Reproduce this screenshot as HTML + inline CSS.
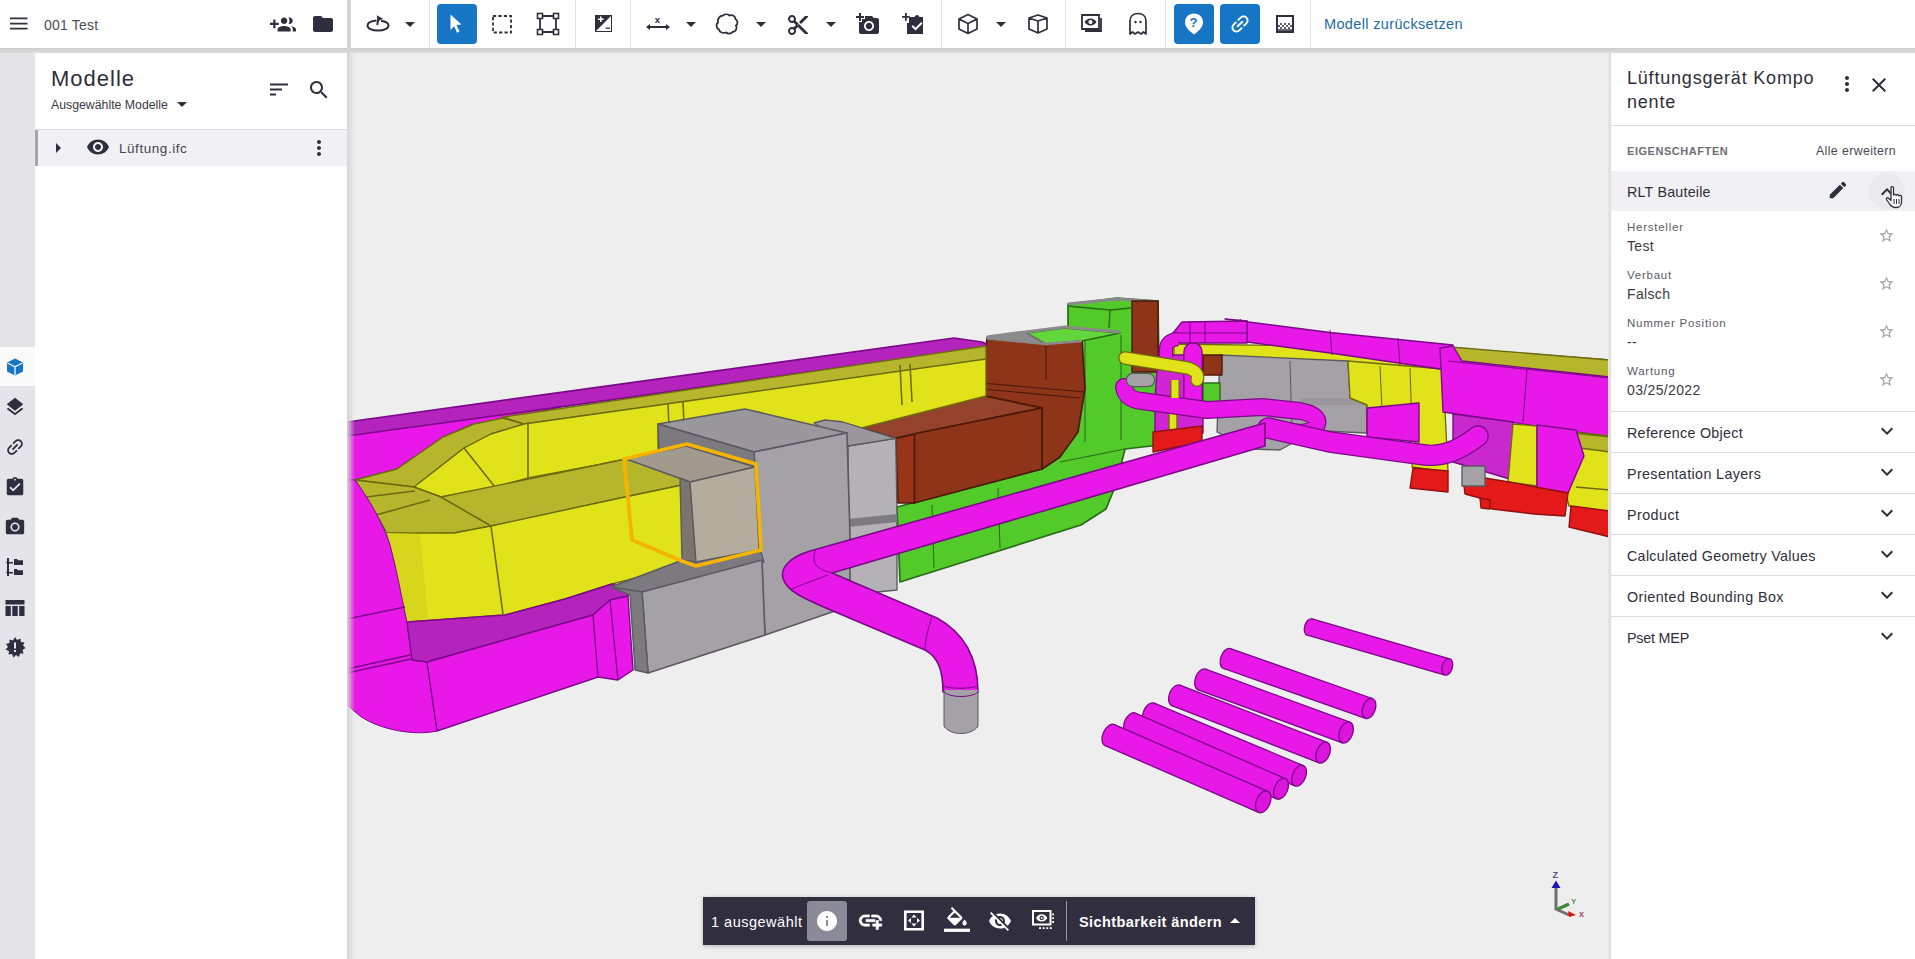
<!DOCTYPE html>
<html><head><meta charset="utf-8">
<style>
*{margin:0;padding:0;box-sizing:border-box}
html,body{width:1915px;height:959px;overflow:hidden;background:#ececec;font-family:"Liberation Sans",sans-serif;color:#2f2e3a}
.a{position:absolute}
.t{position:absolute;white-space:nowrap;line-height:1}
svg.i{position:absolute;fill:#2f2e3d}
#scene{position:absolute;left:347px;top:48px;width:1264px;height:911px}
</style></head><body>
<!-- 3D scene -->
<svg id="scene" viewBox="347 48 1264 911" width="1264" height="911">
<rect x="347" y="48" width="1264" height="911" fill="#eeeeee"/>
<polygon points="1174,344 1453,348 1610,360 1610,378 1448,372 1174,358" fill="#e0e21a" stroke="#6e6a10" stroke-width="1.36" stroke-linejoin="round"/>
<polygon points="1220,355 1348,361 1350,398 1367,405 1367,433 1300,430 1296,441 1280,450 1252,449 1217,432" fill="#a4a2a6" stroke="#5a5a60" stroke-width="1.36" stroke-linejoin="round"/>
<polyline points="1290,361 1292,430" fill="none" stroke="#5a5a60" stroke-width="1.04" stroke-linejoin="round"/>
<polygon points="1300,398 1350,398 1367,405 1300,405" fill="#9a989c"/>
<polygon points="1348,361 1443,369 1448,472 1412,467 1417,430 1367,433 1367,405 1350,398" fill="#e0e21a" stroke="#6e6a10" stroke-width="1.36" stroke-linejoin="round"/>
<polyline points="1380,366 1383,432" fill="none" stroke="#6e6a10" stroke-width="1.04" stroke-linejoin="round"/>
<polyline points="1410,368 1412,430" fill="none" stroke="#6e6a10" stroke-width="1.04" stroke-linejoin="round"/>
<polygon points="1367,408 1419,403 1419,442 1367,437" fill="#e818e8" stroke="#7a0a88" stroke-width="1.36" stroke-linejoin="round"/>
<polygon points="1225,319 1330,332.5 1453,345 1448,361 1440,369 1330,353 1247,342 1247,321" fill="#e818e8" stroke="#7a0a88" stroke-width="1.36" stroke-linejoin="round"/>
<polyline points="1240,319 1248,343" fill="none" stroke="#7a0a88" stroke-width="1.04" stroke-linejoin="round"/>
<polyline points="1330,330 1332,355" fill="none" stroke="#7a0a88" stroke-width="1.04" stroke-linejoin="round"/>
<polyline points="1398,338 1400,365" fill="none" stroke="#7a0a88" stroke-width="1.04" stroke-linejoin="round"/>
<polygon points="1450,347 1610,360 1610,378 1448,362" fill="#b6b62c" stroke="#6e6a10" stroke-width="1.36" stroke-linejoin="round"/>
<polygon points="1440,348 1453,346 1462,361 1610,377 1610,437 1443,412" fill="#e818e8" stroke="#7a0a88" stroke-width="1.36" stroke-linejoin="round"/>
<polyline points="1448,361 1610,378" fill="none" stroke="#7a0a88" stroke-width="1.04" stroke-linejoin="round"/>
<polyline points="1527,370 1523,422" fill="none" stroke="#7a0a88" stroke-width="1.04" stroke-linejoin="round"/>
<polygon points="1453,414 1513,422 1513,480 1453,462" fill="#c828cc" stroke="#7a0a88" stroke-width="1.36" stroke-linejoin="round"/>
<polygon points="1513,424 1537,426 1537,486 1508,482" fill="#e0e21a" stroke="#6e6a10" stroke-width="1.36" stroke-linejoin="round"/>
<polygon points="1572,432 1610,436 1610,512 1569,506 1565,490 1574,440" fill="#e0e21a" stroke="#6e6a10" stroke-width="1.36" stroke-linejoin="round"/>
<polygon points="1574,433 1610,437 1610,452 1580,448" fill="#b6b62c" stroke="#6e6a10" stroke-width="1.36" stroke-linejoin="round"/>
<polyline points="1576,487 1610,490" fill="none" stroke="#6e6a10" stroke-width="1.30" stroke-linejoin="round"/>
<polygon points="1537,425 1576,430 1584,456 1568,493 1537,488" fill="#e818e8" stroke="#7a0a88" stroke-width="1.36" stroke-linejoin="round"/>
<polygon points="1413,468 1448,471 1448,492 1410,488" fill="#e41a1a" stroke="#901010" stroke-width="1.36" stroke-linejoin="round"/>
<polygon points="1464,486 1485,478 1509,482 1568,493 1565,516 1534,514 1492,509 1490,508 1480,498 1465,494" fill="#e41a1a" stroke="#901010" stroke-width="1.36" stroke-linejoin="round"/>
<polygon points="1480,498 1490,500 1490,509 1481,508" fill="#e41a1a" stroke="#901010" stroke-width="1.36" stroke-linejoin="round"/>
<polygon points="1571,506 1610,511 1610,537 1569,527" fill="#e41a1a" stroke="#901010" stroke-width="1.36" stroke-linejoin="round"/>
<polygon points="1462,466 1485,466 1485,486 1462,486" fill="#a4a2a6" stroke="#5a5a60" stroke-width="1.36" stroke-linejoin="round"/>
<polygon points="1068,304 1117,298 1158,301 1160,445 1125,449 1122,461 1117,482 1106,509 1081,525 900,582 897,507 1042,469 1060,457 1068,430" fill="#52ca2a" stroke="#2a6a18" stroke-width="1.70" stroke-linejoin="round"/>
<polyline points="1068,304 1118,299 1158,302" fill="none" stroke="#8a8a8a" stroke-width="3.25" stroke-linejoin="round"/>
<polyline points="1068,306 1110,310 1131,308" fill="none" stroke="#2a6a18" stroke-width="1.30" stroke-linejoin="round"/>
<polyline points="1110,310 1109,328" fill="none" stroke="#2a6a18" stroke-width="1.30" stroke-linejoin="round"/>
<polyline points="1085,340 1085,442" fill="none" stroke="#2a6a18" stroke-width="1.04" stroke-linejoin="round"/>
<polyline points="1121,335 1121,440" fill="none" stroke="#2a6a18" stroke-width="1.04" stroke-linejoin="round"/>
<polyline points="1060,462 1125,449" fill="none" stroke="#2a6a18" stroke-width="1.04" stroke-linejoin="round"/>
<polyline points="1117,466 1117,482" fill="none" stroke="#2a6a18" stroke-width="1.04" stroke-linejoin="round"/>
<polyline points="934,568 932,505" fill="none" stroke="#2a6a18" stroke-width="1.04" stroke-linejoin="round"/>
<polyline points="1000,548 998,488" fill="none" stroke="#2a6a18" stroke-width="1.04" stroke-linejoin="round"/>
<polygon points="1132,301 1158,301 1158,372 1132,372" fill="#8e3418" stroke="#4a1a0a" stroke-width="1.36" stroke-linejoin="round"/>
<polygon points="1025,333 1065,328 1120,333 1082,341 1046,344" fill="#62d63a" stroke="#2a6a18" stroke-width="1.36" stroke-linejoin="round"/>
<polygon points="987,338 1046,344 1082,341 1085,388 1078,432 1060,457 1042,469 1042,408 980,395 982,383" fill="#8e3418" stroke="#4a1a0a" stroke-width="1.70" stroke-linejoin="round"/>
<polygon points="987,337 1025,332 1046,344 987,339" fill="#8c8c8c" stroke="#707070" stroke-width="1.70" stroke-linejoin="round"/>
<polyline points="987,337 1025,332 1065,327 1120,332" fill="none" stroke="#8a8a8a" stroke-width="3.25" stroke-linejoin="round"/>
<polyline points="987,338 1046,344 1082,341" fill="none" stroke="#8a8a8a" stroke-width="2.60" stroke-linejoin="round"/>
<polyline points="1046,346 1046,380" fill="none" stroke="#4a1a0a" stroke-width="1.04" stroke-linejoin="round"/>
<polyline points="982,383 1085,392" fill="none" stroke="#4a1a0a" stroke-width="1.04" stroke-linejoin="round"/>
<polyline points="982,389 1080,398" fill="none" stroke="#4a1a0a" stroke-width="1.04" stroke-linejoin="round"/>
<polygon points="841.5,421.7 846.7,417.5 980,395 1042,408 914.5,434.2 895.7,438.4" fill="#94422c" stroke="#4a1a0a" stroke-width="1.70" stroke-linejoin="round"/>
<polygon points="913,434 1042,408 1042,469 914,503" fill="#8e3418" stroke="#4a1a0a" stroke-width="1.70" stroke-linejoin="round"/>
<polygon points="895.7,438.4 914.5,434.2 914.5,503 898,503" fill="#9a3418" stroke="#4a1a0a" stroke-width="1.70" stroke-linejoin="round"/>
<polygon points="1158,355 1203,355 1203,433 1155,440 1155,400" fill="#d024d6" stroke="#7a0a88" stroke-width="1.36" stroke-linejoin="round"/>
<polygon points="1169,410 1177,410 1177,432 1169,433" fill="#e0e21a" stroke="#6e6a10" stroke-width="1.36" stroke-linejoin="round"/>
<polygon points="1153,432 1202,426 1202,442 1153,452" fill="#e41a1a" stroke="#901010" stroke-width="1.36" stroke-linejoin="round"/>
<polygon points="1203,355 1222,355 1222,375 1203,375" fill="#8e3418" stroke="#4a1a0a" stroke-width="1.36" stroke-linejoin="round"/>
<polygon points="1203,383 1220,383 1220,402 1203,402" fill="#52ca2a" stroke="#2a6a18" stroke-width="1.36" stroke-linejoin="round"/>
<path d="M1193,352 L1193,400" fill="none" stroke="#7a0a88" stroke-width="19.5" stroke-linejoin="round" stroke-linecap="round"/>
<path d="M1193,352 L1193,400" fill="none" stroke="#e818e8" stroke-width="17" stroke-linejoin="round" stroke-linecap="round"/>
<path d="M1124,387 Q1126,400 1142,401 L1207,410 L1262,407 L1300,411 Q1322,415 1316,427 Q1308,435 1288,432" fill="none" stroke="#7a0a88" stroke-width="18.0" stroke-linejoin="round" stroke-linecap="round"/>
<path d="M1124,387 Q1126,400 1142,401 L1207,410 L1262,407 L1300,411 Q1322,415 1316,427 Q1308,435 1288,432" fill="none" stroke="#e818e8" stroke-width="15.5" stroke-linejoin="round" stroke-linecap="round"/>
<path d="M1268,428 L1330,442 L1425,455 Q1450,458 1478,436" fill="none" stroke="#7a0a88" stroke-width="21.5" stroke-linejoin="round" stroke-linecap="round"/>
<path d="M1268,428 L1330,442 L1425,455 Q1450,458 1478,436" fill="none" stroke="#e818e8" stroke-width="19" stroke-linejoin="round" stroke-linecap="round"/>
<polygon points="1173,333 1182,322 1247,321 1247,343 1173,343" fill="#e818e8" stroke="#7a0a88" stroke-width="1.36" stroke-linejoin="round"/>
<polyline points="1190,323 1190,342" fill="none" stroke="#7a0a88" stroke-width="1.04" stroke-linejoin="round"/>
<polyline points="1205,322 1205,342" fill="none" stroke="#7a0a88" stroke-width="1.04" stroke-linejoin="round"/>
<polyline points="1173,333 1247,333" fill="none" stroke="#7a0a88" stroke-width="1.04" stroke-linejoin="round"/>
<path d="M1178,339 Q1166,340 1166,350 L1166,357" fill="none" stroke="#7a0a88" stroke-width="14.5" stroke-linejoin="round" stroke-linecap="butt"/>
<path d="M1178,339 Q1166,340 1166,350 L1166,357" fill="none" stroke="#e818e8" stroke-width="12" stroke-linejoin="round" stroke-linecap="butt"/>
<path d="M1125,358 L1188,368 Q1200,372 1197,380" fill="none" stroke="#6e6a10" stroke-width="13.5" stroke-linejoin="round" stroke-linecap="round"/>
<path d="M1125,358 L1188,368 Q1200,372 1197,380" fill="none" stroke="#e0e21a" stroke-width="11" stroke-linejoin="round" stroke-linecap="round"/>
<path d="M1175,380 L1175,398" fill="none" stroke="#6e6a10" stroke-width="9.5" stroke-linejoin="round" stroke-linecap="butt"/>
<path d="M1175,380 L1175,398" fill="none" stroke="#e0e21a" stroke-width="7" stroke-linejoin="round" stroke-linecap="butt"/>
<path d="M1133,380 L1148,380" fill="none" stroke="#5a5a60" stroke-width="14.5" stroke-linejoin="round" stroke-linecap="round"/>
<path d="M1133,380 L1148,380" fill="none" stroke="#a4a2a6" stroke-width="12" stroke-linejoin="round" stroke-linecap="round"/>
<polygon points="347,422 954,338 982,342 986,344 986,347 347,437" fill="#b423bc" stroke="#7a0a88" stroke-width="1.70" stroke-linejoin="round"/>
<polygon points="347,436 560,407 503,420 474,424 443,437 397,469 355,480 347,481" fill="#e818e8" stroke="#7a0a88" stroke-width="1.36" stroke-linejoin="round"/>
<polygon points="503,417 986,346 986,360 524,424" fill="#b6b62c" stroke="#6e6a10" stroke-width="1.36" stroke-linejoin="round"/>
<polygon points="397,469 443,437 474,424 503,418 524,424 491,434 464,448 414,487 355,480" fill="#b6b62c" stroke="#6e6a10" stroke-width="1.36" stroke-linejoin="round"/>
<polygon points="524,424 986,359 986,396 846,432 758,452 658,424 658,452 626,459 597,465 528,478 495,487 441,497 414,487 464,448 491,434" fill="#e0e21a" stroke="#6e6a10" stroke-width="1.36" stroke-linejoin="round"/>
<polyline points="528,424 528,478" fill="none" stroke="#6e6a10" stroke-width="1.56" stroke-linejoin="round"/>
<polyline points="464,448 495,487" fill="none" stroke="#6e6a10" stroke-width="1.56" stroke-linejoin="round"/>
<polyline points="668,404 670,450" fill="none" stroke="#6e6a10" stroke-width="1.56" stroke-linejoin="round"/>
<polyline points="683,402 685,446" fill="none" stroke="#6e6a10" stroke-width="1.56" stroke-linejoin="round"/>
<polyline points="900,365 902,405" fill="none" stroke="#6e6a10" stroke-width="1.56" stroke-linejoin="round"/>
<polyline points="910,364 912,402" fill="none" stroke="#6e6a10" stroke-width="1.56" stroke-linejoin="round"/>
<polygon points="355,480 414,487 441,497 597,465 626,459 680,475 682,485 625,497 491,526 454,533 418,534 387,533 366,497" fill="#b6b62c" stroke="#6e6a10" stroke-width="1.36" stroke-linejoin="round"/>
<polyline points="366,497 415,491" fill="none" stroke="#6e6a10" stroke-width="1.56" stroke-linejoin="round"/>
<polyline points="376,515 430,500" fill="none" stroke="#6e6a10" stroke-width="1.56" stroke-linejoin="round"/>
<polyline points="441,497 491,526" fill="none" stroke="#6e6a10" stroke-width="1.56" stroke-linejoin="round"/>
<polygon points="387,533 454,533 491,526 625,497 682,485 690,540 696,562 680,563 667,570 612,584 565,599 505,615 407,622 403,608 395,566" fill="#e0e21a" stroke="#6e6a10" stroke-width="1.36" stroke-linejoin="round"/>
<polyline points="491,526 503,614" fill="none" stroke="#6e6a10" stroke-width="1.56" stroke-linejoin="round"/>
<polygon points="387,533 420,534 428,618 407,622 403,608 395,566" fill="#d8d61c"/>
<path d="M347,480 L355,480 C362,490 380,515 390,545 C398,575 404,610 407,622 L412,660 L427,662 L437,731 C415,736 380,730 360,716 L347,705 Z" fill="#e818e8" stroke="#7a0a88" stroke-width="1" stroke-linejoin="round"/>
<polyline points="347,619 405,607" fill="none" stroke="#7a0a88" stroke-width="1.30" stroke-linejoin="round"/>
<polyline points="347,669 410,655" fill="none" stroke="#7a0a88" stroke-width="1.30" stroke-linejoin="round"/>
<polyline points="347,673 411,659" fill="none" stroke="#7a0a88" stroke-width="1.30" stroke-linejoin="round"/>
<polygon points="407,622 505,615 565,599 612,584 628,590 628,596 610,600 593,615 427,662 412,660" fill="#b423bc" stroke="#7a0a88" stroke-width="1.36" stroke-linejoin="round"/>
<polygon points="427,662 593,615 610,600 628,596 633,670 618,680 598,677 437,731" fill="#e818e8" stroke="#7a0a88" stroke-width="1.36" stroke-linejoin="round"/>
<polyline points="593,615 598,677" fill="none" stroke="#7a0a88" stroke-width="1.30" stroke-linejoin="round"/>
<polyline points="610,600 618,680" fill="none" stroke="#7a0a88" stroke-width="1.30" stroke-linejoin="round"/>
<polygon points="848,446 895.7,438.4 897,514 897,590 848,595" fill="#b4b2b6" stroke="#5a5a60" stroke-width="1.36" stroke-linejoin="round"/>
<polygon points="814,423 825,420 841.5,421.7 895.7,438.4 848,446" fill="#9a989c" stroke="#5a5a60" stroke-width="1.36" stroke-linejoin="round"/>
<polygon points="848,519 897,514 897,522 848,527" fill="#7c7a7e"/>
<polygon points="658,424 745,409 847,433 754,452" fill="#9a989c" stroke="#5a5a60" stroke-width="1.70" stroke-linejoin="round"/>
<polygon points="754,452 847,433 850,535 850,595 835,611 765,635 760,557" fill="#a4a2a6" stroke="#5a5a60" stroke-width="1.70" stroke-linejoin="round"/>
<polygon points="658,424 754,452 755,467 686,446 659,452" fill="#7c7a7e" stroke="#5a5a60" stroke-width="1.36" stroke-linejoin="round"/>
<polygon points="611,587 680,561 696,561 760,549 764,562 642,592" fill="#7c7a7e" stroke="#5a5a60" stroke-width="1.36" stroke-linejoin="round"/>
<polygon points="642,592 762,560 765,635 648,673" fill="#a4a2a6" stroke="#5a5a60" stroke-width="1.70" stroke-linejoin="round"/>
<polygon points="611,587 642,592 648,673 635,670 630,595" fill="#7c7a7e" stroke="#5a5a60" stroke-width="1.36" stroke-linejoin="round"/>
<polygon points="626,459 686,446 755,467 690,482" fill="#a29a8e" stroke="#5a5a60" stroke-width="1.36" stroke-linejoin="round"/>
<polygon points="680,478 690,482 696,562 682,560" fill="#7a766e" stroke="#5a5a60" stroke-width="1.36" stroke-linejoin="round"/>
<polygon points="690,482 755,467 759,550 696,562" fill="#b4ac9c" stroke="#5a5a60" stroke-width="1.36" stroke-linejoin="round"/>
<polygon points="624,459 687,444 756,464 761,550 696,566 682,561 632,540" fill="none" stroke="#f5b400" stroke-width="3.74" stroke-linejoin="round"/>
<path d="M1265,423 L810,551 C790,557 780,568 783,578 C786,590 800,597 833,611 L925,650 C938,657 943,670 943,692 L978,692 C978,660 966,634 937,618 L832,573 L1265,446 Z" fill="#e818e8" stroke="#7a0a88" stroke-width="1.6" stroke-linejoin="round"/>
<path d="M816,549 C812,560 812,568 832,573" fill="none" stroke="#7a0a88" stroke-width="1" stroke-linejoin="round"/>
<path d="M790,590 C800,585 815,580 828,575" fill="none" stroke="#7a0a88" stroke-width="1" stroke-linejoin="round"/>
<path d="M932,616 C928,630 925,640 925,650" fill="none" stroke="#7a0a88" stroke-width="1" stroke-linejoin="round"/>
<path d="M943,686 C950,689 970,689 978,686" fill="none" stroke="#7a0a88" stroke-width="1" stroke-linejoin="round"/>
<polygon points="944,692 978,692 978,728 944,728" fill="#b0b0b2"/>
<path d="M944,690 L944,726 C950,736 972,736 978,726 L978,690" fill="#a4a2a6" stroke="#5a5a60" stroke-width="1" stroke-linejoin="round"/>
<path d="M944,692 C950,698 972,698 978,692" fill="none" stroke="#7a0a88" stroke-width="1" stroke-linejoin="round"/>
<ellipse cx="1309.7" cy="627.1" rx="5.1" ry="8.5" transform="rotate(16.2 1309.7 627.1)" fill="#e818e8" stroke="#7a0a88" stroke-width="1.3"/>
<polygon points="1307.4,635.2 1444.9,675.1 1449.6,658.8 1312.1,618.9" fill="#e818e8"/>
<polyline points="1307.4,635.2 1444.9,675.1" fill="none" stroke="#7a0a88" stroke-width="1.30" stroke-linejoin="round"/>
<polyline points="1312.1,618.9 1449.6,658.8" fill="none" stroke="#7a0a88" stroke-width="1.30" stroke-linejoin="round"/>
<ellipse cx="1447.3" cy="666.9" rx="5.1" ry="8.5" transform="rotate(16.2 1447.3 666.9)" fill="#dc14dc" stroke="#7a0a88" stroke-width="1.3"/>
<ellipse cx="1227.0" cy="658.6" rx="6.3" ry="10.5" transform="rotate(19.3 1227.0 658.6)" fill="#e818e8" stroke="#7a0a88" stroke-width="1.3"/>
<polygon points="1223.6,668.5 1365.5,718.3 1372.4,698.5 1230.5,648.7" fill="#e818e8"/>
<polyline points="1223.6,668.5 1365.5,718.3" fill="none" stroke="#7a0a88" stroke-width="1.30" stroke-linejoin="round"/>
<polyline points="1230.5,648.7 1372.4,698.5" fill="none" stroke="#7a0a88" stroke-width="1.30" stroke-linejoin="round"/>
<ellipse cx="1369.0" cy="708.4" rx="6.3" ry="10.5" transform="rotate(19.3 1369.0 708.4)" fill="#dc14dc" stroke="#7a0a88" stroke-width="1.3"/>
<ellipse cx="1201.9" cy="679.5" rx="6.6" ry="11.0" transform="rotate(20.2 1201.9 679.5)" fill="#e818e8" stroke="#7a0a88" stroke-width="1.3"/>
<polygon points="1198.1,689.8 1342.3,742.8 1349.9,722.2 1205.7,669.2" fill="#e818e8"/>
<polyline points="1198.1,689.8 1342.3,742.8" fill="none" stroke="#7a0a88" stroke-width="1.30" stroke-linejoin="round"/>
<polyline points="1205.7,669.2 1349.9,722.2" fill="none" stroke="#7a0a88" stroke-width="1.30" stroke-linejoin="round"/>
<ellipse cx="1346.1" cy="732.5" rx="6.6" ry="11.0" transform="rotate(20.2 1346.1 732.5)" fill="#dc14dc" stroke="#7a0a88" stroke-width="1.3"/>
<ellipse cx="1175.9" cy="695.4" rx="6.6" ry="11.0" transform="rotate(21.2 1175.9 695.4)" fill="#e818e8" stroke="#7a0a88" stroke-width="1.3"/>
<polygon points="1171.9,705.7 1319.1,762.8 1327.1,742.3 1179.9,685.2" fill="#e818e8"/>
<polyline points="1171.9,705.7 1319.1,762.8" fill="none" stroke="#7a0a88" stroke-width="1.30" stroke-linejoin="round"/>
<polyline points="1179.9,685.2 1327.1,742.3" fill="none" stroke="#7a0a88" stroke-width="1.30" stroke-linejoin="round"/>
<ellipse cx="1323.1" cy="752.6" rx="6.6" ry="11.0" transform="rotate(21.2 1323.1 752.6)" fill="#dc14dc" stroke="#7a0a88" stroke-width="1.3"/>
<ellipse cx="1149.9" cy="713.3" rx="6.6" ry="11.0" transform="rotate(22.7 1149.9 713.3)" fill="#e818e8" stroke="#7a0a88" stroke-width="1.3"/>
<polygon points="1145.7,723.4 1294.8,785.8 1303.3,765.6 1154.2,703.2" fill="#e818e8"/>
<polyline points="1145.7,723.4 1294.8,785.8" fill="none" stroke="#7a0a88" stroke-width="1.30" stroke-linejoin="round"/>
<polyline points="1154.2,703.2 1303.3,765.6" fill="none" stroke="#7a0a88" stroke-width="1.30" stroke-linejoin="round"/>
<ellipse cx="1299.1" cy="775.7" rx="6.6" ry="11.0" transform="rotate(22.7 1299.1 775.7)" fill="#dc14dc" stroke="#7a0a88" stroke-width="1.3"/>
<ellipse cx="1131.0" cy="723.2" rx="6.6" ry="11.0" transform="rotate(23.6 1131.0 723.2)" fill="#e818e8" stroke="#7a0a88" stroke-width="1.3"/>
<polygon points="1126.6,733.3 1276.6,798.8 1285.4,778.7 1135.4,713.2" fill="#e818e8"/>
<polyline points="1126.6,733.3 1276.6,798.8" fill="none" stroke="#7a0a88" stroke-width="1.30" stroke-linejoin="round"/>
<polyline points="1135.4,713.2 1285.4,778.7" fill="none" stroke="#7a0a88" stroke-width="1.30" stroke-linejoin="round"/>
<ellipse cx="1281.0" cy="788.8" rx="6.6" ry="11.0" transform="rotate(23.6 1281.0 788.8)" fill="#dc14dc" stroke="#7a0a88" stroke-width="1.3"/>
<ellipse cx="1109.8" cy="735.2" rx="6.9" ry="11.5" transform="rotate(23.5 1109.8 735.2)" fill="#e818e8" stroke="#7a0a88" stroke-width="1.3"/>
<polygon points="1105.2,745.7 1258.6,812.4 1267.8,791.3 1114.4,724.6" fill="#e818e8"/>
<polyline points="1105.2,745.7 1258.6,812.4" fill="none" stroke="#7a0a88" stroke-width="1.30" stroke-linejoin="round"/>
<polyline points="1114.4,724.6 1267.8,791.3" fill="none" stroke="#7a0a88" stroke-width="1.30" stroke-linejoin="round"/>
<ellipse cx="1263.2" cy="801.8" rx="6.9" ry="11.5" transform="rotate(23.5 1263.2 801.8)" fill="#dc14dc" stroke="#7a0a88" stroke-width="1.3"/>
<g transform="translate(1556,879)"><path d="M0,7 L0,30 L13,36" fill="none" stroke="#707070" stroke-width="3"/><path d="M-4.5,9 L0,1.5 L4.5,9z" fill="#1a1aa8"/><text x="-3.5" y="-1" font-size="9" font-family="Liberation Sans" font-weight="bold" fill="#505088">Z</text><path d="M2,30 L13,25" stroke="#3a8a3a" stroke-width="3.5"/><text x="15" y="25" font-size="8" font-family="Liberation Sans" font-weight="bold" fill="#5a9a5a">Y</text><path d="M12,32 L20,36 L13,38z" fill="#e01010"/><text x="23" y="38" font-size="9" font-family="Liberation Sans" font-weight="bold" fill="#a05070">x</text></g>
</svg>

<!-- top bar -->
<div class="a" style="left:0;top:0;width:1915px;height:48px;background:#fff"></div>
<div class="a" style="left:0;top:48px;width:1915px;height:5px;background:linear-gradient(#cdcdcd,#dcdcdc)"></div>
<div class="a" style="left:347px;top:0;width:4px;height:53px;background:#d4d4d4"></div>


<!-- top bar content -->
<svg class="i" style="left:6px;top:12px" width="24" height="24" viewBox="0 0 24 24"><path d="M4 5.6h17.5v1.7H4zM4 10.7h17.5v1.7H4zM4 15.7h17.5v1.7H4z" fill="#333340"/></svg>
<div class="t" style="left:44px;top:18px;font-size:14px;letter-spacing:0.2px;color:#4e4e58">001 Test</div>
<svg class="i" style="left:270px;top:12px" width="26" height="26" viewBox="0 0 24 24"><path d="M8 10H5V7H3v3H0v2h3v3h2v-3h3v-2zm10 1c1.66 0 2.99-1.34 2.99-3S19.66 5 18 5c-.32 0-.63.05-.91.14.57.81.9 1.79.9 2.86s-.34 2.04-.9 2.86c.28.09.59.14.91.14zm-5 0c1.66 0 2.99-1.34 2.99-3S14.66 5 13 5c-1.66 0-3 1.34-3 3s1.34 3 3 3zm6.62 2.16c.83.73 1.38 1.66 1.38 2.84v2h3v-2c0-1.54-2.37-2.49-4.38-2.84zM13 13c-2 0-6 1-6 3v2h12v-2c0-2-4-3-6-3z"/></svg>
<svg class="i" style="left:311px;top:11.5px" width="24" height="24" viewBox="0 0 24 24"><path d="M10 4H4c-1.1 0-1.99.9-1.99 2L2 18c0 1.1.9 2 2 2h16c1.1 0 2-.9 2-2V8c0-1.1-.9-2-2-2h-8l-2-2z"/></svg>
<div class="a" style="left:429px;top:0;width:1px;height:48px;background:#e2e2e2"></div>
<div class="a" style="left:575px;top:0;width:1px;height:48px;background:#e2e2e2"></div>
<div class="a" style="left:630px;top:0;width:1px;height:48px;background:#e2e2e2"></div>
<div class="a" style="left:941px;top:0;width:1px;height:48px;background:#e2e2e2"></div>
<div class="a" style="left:1065px;top:0;width:1px;height:48px;background:#e2e2e2"></div>
<div class="a" style="left:1165px;top:0;width:1px;height:48px;background:#e2e2e2"></div>
<div class="a" style="left:1310px;top:0;width:1px;height:48px;background:#e2e2e2"></div>
<!-- orbit -->
<svg class="i" style="left:364px;top:12px" width="28" height="24" viewBox="0 0 28 24"><path d="M12.5 8.6 C6.5 9.2 3.5 11 3.5 13.5 C3.5 16.5 8 18.6 14 18.6 S24.5 16.5 24.5 13.5 C24.5 11 21.5 9.4 17 8.7" fill="none" stroke="#2f2e3d" stroke-width="2"/><path d="M13.2 13 L14.5 6.5" stroke="#2f2e3d" stroke-width="2"/><path d="M12.8 3.3 L19 6.8 L13.5 9.6z"/></svg>
<svg class="i" style="left:401px;top:12px" width="18" height="24" viewBox="4 0 16 24"><path d="M7 10l5 5 5-5z"/></svg>
<!-- select active -->
<div class="a" style="left:437px;top:4px;width:40px;height:40px;background:#1676c5;border-radius:4px"></div>
<svg class="i" style="left:447px;top:13px" width="20" height="22" viewBox="0 0 20 22"><path d="M3.5 1.5 L14.5 11.5 L9.5 12 L12.5 18.5 L10 19.7 L7.2 13.3 L3.5 17z" fill="#fff"/></svg>
<!-- rect select -->
<svg class="i" style="left:491px;top:13px" width="22" height="22" viewBox="0 0 22 22"><rect x="2" y="3" width="18" height="16.5" fill="none" stroke="#2f2e3d" stroke-width="1.8" stroke-dasharray="3.2 2.2"/></svg>
<!-- bounding -->
<svg class="i" style="left:536px;top:12px" width="24" height="24" viewBox="0 0 24 24"><path d="M4 4h16v16H4z" fill="none" stroke="#2f2e3d" stroke-width="1.8"/><rect x="1.5" y="1.5" width="5" height="5" fill="#fff" stroke="#2f2e3d" stroke-width="1.6"/><rect x="17.5" y="1.5" width="5" height="5" fill="#fff" stroke="#2f2e3d" stroke-width="1.6"/><rect x="1.5" y="17.5" width="5" height="5" fill="#fff" stroke="#2f2e3d" stroke-width="1.6"/><rect x="17.5" y="17.5" width="5" height="5" fill="#fff" stroke="#2f2e3d" stroke-width="1.6"/></svg>
<!-- exposure -->
<svg class="i" style="left:592px;top:13px" width="24" height="22" viewBox="0 0 24 22"><path d="M3 2h17v17H3z"/><path d="M19 3 L4 18 H19z" fill="#fff"/><path d="M6 5.5h2v-2h1.6v2h2v1.6h-2v2H8v-2H6z" fill="#fff"/><path d="M13.5 14.5h4.5v1.3h-4.5z"/></svg>
<!-- measure -->
<svg class="i" style="left:644px;top:12px" width="28" height="24" viewBox="0 0 28 24"><path d="M2 15 L6 12 V14 H22 V12 L26 15 L22 18 V16 H6 V18z"/><text x="10.8" y="10.5" font-size="9.5" font-weight="bold" font-family="Liberation Sans" fill="#2f2e3d">x</text></svg>
<svg class="i" style="left:682px;top:12px" width="18" height="24" viewBox="4 0 16 24"><path d="M7 10l5 5 5-5z"/></svg>
<!-- cloud -->
<svg class="i" style="left:714px;top:11px" width="26" height="26" viewBox="0 0 26 26"><path d="M9 4.5 C11 3 14 3 15.5 4.5 C18 3.5 21.5 5 21.5 8 C24 9.5 24 13 22 14.5 C23.5 17 22 21 18.5 21 C17 23 13.5 23 12 21.5 C9 22.5 5.5 21.5 5 18.5 C2 17.5 1.8 13 4 11.5 C3 8.5 5.5 4.5 9 4.5z" fill="none" stroke="#2f2e3d" stroke-width="1.8"/></svg>
<svg class="i" style="left:752px;top:12px" width="18" height="24" viewBox="4 0 16 24"><path d="M7 10l5 5 5-5z"/></svg>
<!-- scissors -->
<svg class="i" style="left:786px;top:12.5px" width="24" height="24" viewBox="0 0 24 24"><path d="M9.64 7.64c.23-.5.36-1.05.36-1.64 0-2.21-1.79-4-4-4S2 3.79 2 6s1.79 4 4 4c.59 0 1.14-.13 1.64-.36L10 12l-2.36 2.36C7.14 14.13 6.59 14 6 14c-2.21 0-4 1.79-4 4s1.79 4 4 4 4-1.79 4-4c0-.59-.13-1.14-.36-1.64L12 14l7 7h3v-1L9.64 7.64zM6 8c-1.1 0-2-.89-2-2s.9-2 2-2 2 .89 2 2-.9 2-2 2zm0 12c-1.1 0-2-.89-2-2s.9-2 2-2 2 .89 2 2-.9 2-2 2zm6-7.5c-.28 0-.5-.22-.5-.5s.22-.5.5-.5.5.22.5.5-.22.5-.5.5zM19 3l-6 6 2 2 7-7V3z"/></svg>
<svg class="i" style="left:822px;top:12px" width="18" height="24" viewBox="4 0 16 24"><path d="M7 10l5 5 5-5z"/></svg>
<!-- camera add -->
<svg class="i" style="left:856px;top:12px" width="24" height="24" viewBox="0 0 24 24"><path d="M3 4V1h2v3h3v2H5v3H3V6H0V4h3zm3 6V7h3V4h7l1.83 2H21c1.1 0 2 .9 2 2v12c0 1.1-.9 2-2 2H5c-1.1 0-2-.9-2-2V10h3zm7 9c2.76 0 5-2.24 5-5s-2.24-5-5-5-5 2.24-5 5 2.24 5 5 5zm-3.2-5c0 1.77 1.43 3.2 3.2 3.2s3.2-1.43 3.2-3.2-1.43-3.2-3.2-3.2-3.2 1.43-3.2 3.2z"/></svg>
<!-- checklist add -->
<svg class="i" style="left:902px;top:12px" width="24" height="24" viewBox="0 0 24 24"><path d="M7 5h5.5c.5-1.2 1.5-2 2.5-2s2 .8 2.5 2H21v17H5V11h2z"/><path d="M3 4V1h1.8v3h3v1.8h-3v3H3v-3H0V4z"/><path d="M9.5 14.5l1.4-1.4 2.6 2.6 5.6-5.6 1.4 1.4-7 7z" fill="#fff"/></svg>
<!-- cube -->
<svg class="i" style="left:956px;top:12px" width="24" height="24" viewBox="0 0 24 24"><path d="M12 2.5 L21 7 V17 L12 21.5 L3 17 V7z M3 7 L12 11.5 L21 7 M12 11.5 V21.5" fill="none" stroke="#2f2e3d" stroke-width="1.7" stroke-linejoin="round"/></svg>
<svg class="i" style="left:992px;top:12px" width="18" height="24" viewBox="4 0 16 24"><path d="M7 10l5 5 5-5z"/></svg>
<svg class="i" style="left:1026px;top:12px" width="24" height="24" viewBox="0 0 24 24"><path d="M12 3 L21 6 V17 L12 21 L3 17 V6z M3 6 L12 9 L21 6 M12 9 V21" fill="none" stroke="#2f2e3d" stroke-width="1.7" stroke-linejoin="round"/></svg>
<!-- eye layers -->
<svg class="i" style="left:1080px;top:12px" width="24" height="24" viewBox="0 0 24 24"><path d="M2 3h17v14H2z" fill="none" stroke="#2f2e3d" stroke-width="1.8"/><path d="M21 6v13H5" fill="none" stroke="#2f2e3d" stroke-width="1.8"/><path d="M10.5 6.5c-3 0-5 2-6 3.5 1 1.5 3 3.5 6 3.5s5-2 6-3.5c-1-1.5-3-3.5-6-3.5zm0 5.6a2.1 2.1 0 110-4.2 2.1 2.1 0 010 4.2z"/></svg>
<!-- ghost -->
<svg class="i" style="left:1126px;top:11px" width="24" height="26" viewBox="0 0 24 26"><path d="M4 23 V10 C4 5 7.5 2.5 12 2.5 S20 5 20 10 V23 L17.5 21 L15 23 L12 21 L9 23 L6.5 21z" fill="none" stroke="#2f2e3d" stroke-width="1.7" stroke-linejoin="round"/><circle cx="9.5" cy="11" r="1.2"/><circle cx="14.5" cy="11" r="1.2"/></svg>
<!-- help active -->
<div class="a" style="left:1174px;top:4px;width:40px;height:40px;background:#1676c5;border-radius:4px"></div>
<svg class="i" style="left:1183px;top:12px" width="22" height="24" viewBox="0 0 22 24"><path d="M11 1.5 C16.3 1.5 20 5.3 20 10.3 C20 15.5 15.5 19 11 22.5 C6.5 19 2 15.5 2 10.3 C2 5.3 5.7 1.5 11 1.5z" fill="#fff"/><text x="6.6" y="15" font-size="13" font-weight="bold" font-family="Liberation Sans" fill="#1676c5">?</text></svg>
<div class="a" style="left:1220px;top:4px;width:40px;height:40px;background:#1676c5;border-radius:4px"></div>
<svg class="i" style="left:1228px;top:12px" width="24" height="24" viewBox="0 0 24 24"><g transform="rotate(-45 12 12)"><path d="M3.9 12c0-1.71 1.39-3.1 3.1-3.1h4V7H7c-2.76 0-5 2.24-5 5s2.24 5 5 5h4v-1.9H7c-1.71 0-3.1-1.39-3.1-3.1zM8 13h8v-2H8v2zm9-6h-4v1.9h4c1.71 0 3.1 1.39 3.1 3.1s-1.39 3.1-3.1 3.1h-4V17h4c2.76 0 5-2.24 5-5s-2.24-5-5-5z" fill="#fff"/></g></svg>
<!-- checker -->
<svg class="i" style="left:1275px;top:14px" width="20" height="20" viewBox="0 0 20 20"><path d="M2 2h16v16H2z" fill="none" stroke="#2f2e3d" stroke-width="2"/><path d="M3 9h14v8H3z" fill="#2f2e3d" opacity=".75"/><path d="M3 9h2v2H3zM7 9h2v2H7zM11 9h2v2h-2zM15 9h2v2h-2zM5 11h2v2H5zM9 11h2v2H9zM13 11h2v2h-2zM3 13h2v2H3zM7 13h2v2H7zM11 13h2v2h-2zM15 13h2v2h-2z" fill="#fff"/></svg>
<div class="t" style="left:1324px;top:17px;font-size:14.5px;letter-spacing:0.35px;color:#1f6aa6">Modell zurücksetzen</div>

<!-- left rail -->
<div class="a" style="left:0;top:53px;width:35px;height:906px;background:#e4e4e9"></div>
<div class="a" style="left:0;top:347px;width:35px;height:39px;background:#fafafa"></div>

<!-- models panel -->
<div class="a" style="left:35px;top:53px;width:312px;height:906px;background:#fff"></div>
<div class="a" style="left:347px;top:53px;width:8px;height:906px;background:linear-gradient(90deg,#d6d6d6,rgba(236,236,236,0))"></div>


<!-- rail icons -->
<svg class="i" style="left:5px;top:357px" width="20" height="20" viewBox="0 0 20 20"><path d="M10 1.5 L18 5.5 V14.5 L10 18.5 L2 14.5 V5.5z" fill="#1676c5"/><path d="M2.5 6 L10 9.8 L17.5 6 M10 9.8 V18" fill="none" stroke="#fafafa" stroke-width="1.3"/></svg>
<svg class="i" style="left:4px;top:396px" width="22" height="22" viewBox="0 0 24 24"><path d="M11.99 18.54l-7.37-5.73L3 14.07l9 7 9-7-1.63-1.27-7.38 5.74zM12 16l7.36-5.73L21 9l-9-7-9 7 1.63 1.27L12 16z"/></svg>
<svg class="i" style="left:4px;top:436px" width="22" height="22" viewBox="0 0 24 24"><g transform="rotate(-45 12 12)"><path d="M3.9 12c0-1.71 1.39-3.1 3.1-3.1h4V7H7c-2.76 0-5 2.24-5 5s2.24 5 5 5h4v-1.9H7c-1.71 0-3.1-1.39-3.1-3.1zM8 13h8v-2H8v2zm9-6h-4v1.9h4c1.71 0 3.1 1.39 3.1 3.1s-1.39 3.1-3.1 3.1h-4V17h4c2.76 0 5-2.24 5-5s-2.24-5-5-5z"/></g></svg>
<svg class="i" style="left:4px;top:476px" width="22" height="22" viewBox="0 0 24 24"><path d="M19 3h-4.18C14.4 1.84 13.3 1 12 1c-1.3 0-2.4.84-2.82 2H5c-1.1 0-2 .9-2 2v14c0 1.1.9 2 2 2h14c1.1 0 2-.9 2-2V5c0-1.1-.9-2-2-2zm-7 0c.55 0 1 .45 1 1s-.45 1-1 1-1-.45-1-1 .45-1 1-1zm-2 14l-4-4 1.41-1.41L10 14.17l6.59-6.59L18 9l-8 8z"/></svg>
<svg class="i" style="left:4px;top:516px" width="22" height="22" viewBox="0 0 24 24"><path d="M12 15.2a3.2 3.2 0 100-6.4 3.2 3.2 0 000 6.4z"/><path d="M9 2L7.17 4H4c-1.1 0-2 .9-2 2v12c0 1.1.9 2 2 2h16c1.1 0 2-.9 2-2V6c0-1.1-.9-2-2-2h-3.17L15 2H9zm3 15c-2.76 0-5-2.24-5-5s2.24-5 5-5 5 2.24 5 5-2.24 5-5 5z"/></svg>
<svg class="i" style="left:4px;top:556px" width="22" height="22" viewBox="0 0 22 22"><path d="M3 2h2v18H3zM3 6h6v1.5H3zM3 16h6v1.5H3z"/><path d="M10 3h3l1 1.2h5V9h-9zM10 13h3l1 1.2h5V19h-9z"/><path d="M1.5 6.7 L4 4.5 6.5 6.7zM1.5 16.7 L4 14.5 6.5 16.7z"/></svg>
<svg class="i" style="left:4px;top:597px" width="22" height="22" viewBox="0 0 22 22"><path d="M1.5 3h19v4.5h-19zM1.5 9h5.3v10H1.5zM8.3 9h5.4v10H8.3zM15.2 9h5.3v10h-5.3z"/></svg>
<svg class="i" style="left:4px;top:636px" width="22" height="22" viewBox="0 0 22 22"><path d="M11 1 L13 4 L16.5 2.5 L16.8 6 L20.5 6.5 L19 9.5 L21.5 12 L18.5 14 L19.5 17.5 L16 17.5 L15 21 L12 19 L9.5 21.5 L8 18 L4.5 18.5 L5 15 L1.5 13.5 L4 11 L2 8 L5.5 7 L5.5 3.5 L9 4.5z"/><path d="M10 6.5h2v6h-2zM10 14h2v2h-2z" fill="#e4e4e9"/></svg>

<!-- models panel content -->
<div class="t" style="left:51px;top:68px;font-size:22px;letter-spacing:1px;color:#2f2e3a">Modelle</div>
<div class="t" style="left:51px;top:99px;font-size:12.3px;color:#3a3a46">Ausgewählte Modelle</div>
<svg class="i" style="left:174px;top:96px" width="16" height="16" viewBox="4 4 16 16"><path d="M7 10l5 5 5-5z"/></svg>
<svg class="i" style="left:267px;top:78px" width="24" height="24" viewBox="0 0 24 24"><path d="M3 18h6v-2H3v2zM3 6v2h18V6H3zm0 7h12v-2H3v2z" transform="translate(0 -0.5)"/></svg>
<svg class="i" style="left:307px;top:78px" width="24" height="24" viewBox="0 0 24 24"><path d="M15.5 14h-.79l-.28-.27C15.41 12.59 16 11.11 16 9.5 16 5.91 13.09 3 9.5 3S3 5.91 3 9.5 5.91 16 9.5 16c1.61 0 3.09-.59 4.23-1.57l.27.28v.79l5 4.99L20.49 19l-4.99-5zm-6 0C7.01 14 5 11.99 5 9.5S7.01 5 9.5 5 14 7.01 14 9.5 11.99 14 9.5 14z"/></svg>
<div class="a" style="left:35px;top:129px;width:312px;height:37px;background:#f1f1f5;border-top:1px solid #dedee2"></div>
<div class="a" style="left:35px;top:130px;width:3px;height:36px;background:#a6a6aa"></div>
<svg class="i" style="left:49px;top:139px" width="18" height="18" viewBox="3 3 18 18"><path d="M10 17l5-5-5-5v10z"/></svg>
<svg class="i" style="left:86px;top:135px" width="24" height="24" viewBox="0 0 24 24"><path d="M12 4.5C7 4.5 2.73 7.61 1 12c1.73 4.39 6 7.5 11 7.5s9.27-3.11 11-7.5c-1.73-4.39-6-7.5-11-7.5zM12 17c-2.76 0-5-2.24-5-5s2.24-5 5-5 5 2.24 5 5-2.24 5-5 5zm0-8c-1.66 0-3 1.34-3 3s1.34 3 3 3 3-1.34 3-3-1.34-3-3-3z"/></svg>
<div class="t" style="left:119px;top:142px;font-size:13.5px;letter-spacing:0.55px;color:#44444e">Lüftung.ifc</div>
<svg class="i" style="left:307px;top:136px" width="24" height="24" viewBox="0 0 24 24"><path d="M12 8c1.1 0 2-.9 2-2s-.9-2-2-2-2 .9-2 2 .9 2 2 2zm0 2c-1.1 0-2 .9-2 2s.9 2 2 2 2-.9 2-2-.9-2-2-2zm0 6c-1.1 0-2 .9-2 2s.9 2 2 2 2-.9 2-2-.9-2-2-2z"/></svg>

<!-- properties panel -->
<div class="a" style="left:1611px;top:53px;width:304px;height:906px;background:#fff"></div>
<div class="a" style="left:1608px;top:53px;width:3px;height:906px;background:linear-gradient(90deg,#e8e8e8,#dadada)"></div>


<!-- properties content -->
<div class="t" style="left:1627px;top:69px;font-size:18px;letter-spacing:0.8px;color:#2f2e3a">Lüftungsgerät Kompo</div>
<div class="t" style="left:1627px;top:93px;font-size:18px;letter-spacing:0.8px;color:#2f2e3a">nente</div>
<svg class="i" style="left:1835px;top:72px" width="24" height="24" viewBox="0 0 24 24"><path d="M12 8c1.1 0 2-.9 2-2s-.9-2-2-2-2 .9-2 2 .9 2 2 2zm0 2c-1.1 0-2 .9-2 2s.9 2 2 2 2-.9 2-2-.9-2-2-2zm0 6c-1.1 0-2 .9-2 2s.9 2 2 2 2-.9 2-2-.9-2-2-2z"/></svg>
<svg class="i" style="left:1867px;top:73px" width="24" height="24" viewBox="0 0 24 24"><path d="M19 6.41L17.59 5 12 10.59 6.41 5 5 6.41 10.59 12 5 17.59 6.41 19 12 13.41 17.59 19 19 17.59 13.41 12z"/></svg>
<div class="a" style="left:1611px;top:125px;width:304px;height:1px;background:#dcdce0"></div>
<div class="t" style="left:1627px;top:146px;font-size:11px;font-weight:bold;letter-spacing:0.55px;color:#6e6e78">EIGENSCHAFTEN</div>
<div class="t" style="left:1816px;top:145px;font-size:12.3px;letter-spacing:0.4px;color:#4a4a54">Alle erweitern</div>
<div class="a" style="left:1611px;top:171px;width:304px;height:40px;background:#f1f1f5"></div>
<div class="t" style="left:1627px;top:185px;font-size:14.3px;letter-spacing:0.2px;color:#2f2e3a">RLT Bauteile</div>
<svg class="i" style="left:1827px;top:179px" width="22" height="22" viewBox="0 0 24 24"><path d="M3 17.25V21h3.75L17.81 9.94l-3.75-3.75L3 17.25zM20.71 7.04c.39-.39.39-1.02 0-1.41l-2.34-2.34c-.39-.39-1.02-.39-1.41 0l-1.83 1.83 3.75 3.75 1.83-1.83z"/></svg>
<div class="a" style="left:1869px;top:173px;width:36px;height:36px;border-radius:18px;background:#e9e9ee"></div>
<svg class="i" style="left:1875px;top:180px" width="24" height="24" viewBox="0 0 24 24"><path d="M12 8l-6 6 1.41 1.41L12 10.83l4.59 4.58L18 14z"/></svg>
<svg class="i" style="left:1884px;top:184px" width="22" height="26" viewBox="0 0 22 26"><path d="M7 3.5 C7 2.2 9.5 2.2 9.5 3.5 V11 C10 10 12 10 12.3 11.3 C12.8 10.3 14.8 10.5 15 11.8 C15.5 11 17.5 11.2 17.5 12.6 V18 C17.5 21 15.5 23.5 12.5 23.5 H10.5 C8.5 23.5 7.5 22.5 6 20.5 L2.5 15.5 C2 14.5 3.3 13.3 4.3 14 L7 16.5z" fill="#fff" stroke="#2f2e3a" stroke-width="1.3" stroke-linejoin="round"/><path d="M10 15v5M12.5 15v5M15 15v5" stroke="#2f2e3a" stroke-width="1" fill="none"/></svg>

<div class="t" style="left:1627px;top:222px;font-size:11.5px;letter-spacing:0.75px;color:#5a5a64">Hersteller</div>
<div class="t" style="left:1627px;top:238.5px;font-size:14px;letter-spacing:0.35px;color:#3a3a44">Test</div>
<svg class="i" style="left:1878px;top:227px;fill:#a0a0a8" width="17" height="17" viewBox="0 0 24 24"><path d="M22 9.24l-7.19-.62L12 2 9.19 8.63 2 9.24l5.46 4.73L5.82 21 12 17.27 18.18 21l-1.63-7.03L22 9.24zM12 15.4l-3.76 2.27 1-4.28-3.32-2.88 4.38-.38L12 6.1l1.71 4.04 4.38.38-3.32 2.88 1 4.28L12 15.4z"/></svg>
<div class="t" style="left:1627px;top:270px;font-size:11.5px;letter-spacing:0.75px;color:#5a5a64">Verbaut</div>
<div class="t" style="left:1627px;top:286.5px;font-size:14px;letter-spacing:0.35px;color:#3a3a44">Falsch</div>
<svg class="i" style="left:1878px;top:275px;fill:#a0a0a8" width="17" height="17" viewBox="0 0 24 24"><path d="M22 9.24l-7.19-.62L12 2 9.19 8.63 2 9.24l5.46 4.73L5.82 21 12 17.27 18.18 21l-1.63-7.03L22 9.24zM12 15.4l-3.76 2.27 1-4.28-3.32-2.88 4.38-.38L12 6.1l1.71 4.04 4.38.38-3.32 2.88 1 4.28L12 15.4z"/></svg>
<div class="t" style="left:1627px;top:318px;font-size:11.5px;letter-spacing:0.75px;color:#5a5a64">Nummer Position</div>
<div class="t" style="left:1627px;top:334.5px;font-size:14px;letter-spacing:0.35px;color:#3a3a44">--</div>
<svg class="i" style="left:1878px;top:323px;fill:#a0a0a8" width="17" height="17" viewBox="0 0 24 24"><path d="M22 9.24l-7.19-.62L12 2 9.19 8.63 2 9.24l5.46 4.73L5.82 21 12 17.27 18.18 21l-1.63-7.03L22 9.24zM12 15.4l-3.76 2.27 1-4.28-3.32-2.88 4.38-.38L12 6.1l1.71 4.04 4.38.38-3.32 2.88 1 4.28L12 15.4z"/></svg>
<div class="t" style="left:1627px;top:366px;font-size:11.5px;letter-spacing:0.75px;color:#5a5a64">Wartung</div>
<div class="t" style="left:1627px;top:382.5px;font-size:14px;letter-spacing:0.35px;color:#3a3a44">03/25/2022</div>
<svg class="i" style="left:1878px;top:371px;fill:#a0a0a8" width="17" height="17" viewBox="0 0 24 24"><path d="M22 9.24l-7.19-.62L12 2 9.19 8.63 2 9.24l5.46 4.73L5.82 21 12 17.27 18.18 21l-1.63-7.03L22 9.24zM12 15.4l-3.76 2.27 1-4.28-3.32-2.88 4.38-.38L12 6.1l1.71 4.04 4.38.38-3.32 2.88 1 4.28L12 15.4z"/></svg>
<div class="a" style="left:1611px;top:411px;width:304px;height:1px;background:#dcdce0"></div>
<div class="t" style="left:1627px;top:426px;font-size:14.3px;letter-spacing:0.3px;color:#2f2e3a">Reference Object</div>
<svg class="i" style="left:1875px;top:419px" width="24" height="24" viewBox="0 0 24 24"><path d="M16.59 8.59L12 13.17 7.41 8.59 6 10l6 6 6-6z"/></svg>
<div class="a" style="left:1611px;top:452px;width:304px;height:1px;background:#dcdce0"></div>
<div class="t" style="left:1627px;top:467px;font-size:14.3px;letter-spacing:0.37px;color:#2f2e3a">Presentation Layers</div>
<svg class="i" style="left:1875px;top:460px" width="24" height="24" viewBox="0 0 24 24"><path d="M16.59 8.59L12 13.17 7.41 8.59 6 10l6 6 6-6z"/></svg>
<div class="a" style="left:1611px;top:493px;width:304px;height:1px;background:#dcdce0"></div>
<div class="t" style="left:1627px;top:508px;font-size:14.3px;letter-spacing:0.45px;color:#2f2e3a">Product</div>
<svg class="i" style="left:1875px;top:501px" width="24" height="24" viewBox="0 0 24 24"><path d="M16.59 8.59L12 13.17 7.41 8.59 6 10l6 6 6-6z"/></svg>
<div class="a" style="left:1611px;top:534px;width:304px;height:1px;background:#dcdce0"></div>
<div class="t" style="left:1627px;top:549px;font-size:14.3px;letter-spacing:0.3px;color:#2f2e3a">Calculated Geometry Values</div>
<svg class="i" style="left:1875px;top:542px" width="24" height="24" viewBox="0 0 24 24"><path d="M16.59 8.59L12 13.17 7.41 8.59 6 10l6 6 6-6z"/></svg>
<div class="a" style="left:1611px;top:575px;width:304px;height:1px;background:#dcdce0"></div>
<div class="t" style="left:1627px;top:590px;font-size:14.3px;letter-spacing:0.43px;color:#2f2e3a">Oriented Bounding Box</div>
<svg class="i" style="left:1875px;top:583px" width="24" height="24" viewBox="0 0 24 24"><path d="M16.59 8.59L12 13.17 7.41 8.59 6 10l6 6 6-6z"/></svg>
<div class="a" style="left:1611px;top:616px;width:304px;height:1px;background:#dcdce0"></div>
<div class="t" style="left:1627px;top:631px;font-size:14.3px;letter-spacing:-0.2px;color:#2f2e3a">Pset MEP</div>
<svg class="i" style="left:1875px;top:624px" width="24" height="24" viewBox="0 0 24 24"><path d="M16.59 8.59L12 13.17 7.41 8.59 6 10l6 6 6-6z"/></svg>
<div class="a" style="left:1611px;top:657px;width:304px;height:0px"></div>

<!-- bottom selection bar -->
<div class="a" style="left:703px;top:897px;width:552px;height:48px;background:#302e3f;box-shadow:0 1px 4px rgba(0,0,0,.25)"></div>
<div class="t" style="left:711px;top:915px;font-size:14.5px;letter-spacing:0.5px;color:#fff">1 ausgewählt</div>
<div class="a" style="left:807px;top:901px;width:40px;height:40px;background:#8b8a98;border-radius:3px"></div>
<svg class="i" style="left:815px;top:909px;fill:#fff" width="24" height="24" viewBox="0 0 24 24"><path d="M12 2C6.48 2 2 6.48 2 12s4.48 10 10 10 10-4.48 10-10S17.52 2 12 2zm1 15h-2v-6h2v6zm0-8h-2V7h2v2z"/></svg>
<svg class="i" style="left:857px;top:907px;fill:#fff" width="27" height="27" viewBox="0 0 24 24"><path d="M8 11h8v2H8zm12.1 1H22c0-2.76-2.24-5-5-5h-4v1.9h4c1.71 0 3.1 1.39 3.1 3.1zM3.9 12c0-1.71 1.39-3.1 3.1-3.1h4V7H7c-2.76 0-5 2.24-5 5s2.24 5 5 5h4v-1.9H7c-1.71 0-3.1-1.39-3.1-3.1zM19 12h-2v3h-3v2h3v3h2v-3h3v-2h-3z" stroke="#fff" stroke-width="0.6"/></svg>
<svg class="i" style="left:902px;top:909px;fill:#fff" width="24" height="24" viewBox="0 0 24 24"><path d="M3.3 2.8h17.4v17.4H3.3z" fill="none" stroke="#fff" stroke-width="2.6"/><path d="M12 5.5l2.6 3h-5.2zM12 17.5l2.6-3h-5.2zM6 11.5l3-2.6v5.2zM18 11.5l-3-2.6v5.2z"/></svg>
<svg class="i" style="left:944px;top:907px;fill:#fff" width="26" height="26" viewBox="0 0 24 24"><path d="M16.56 8.94L7.62 0 6.21 1.41l2.38 2.38-5.15 5.15c-.59.59-.59 1.54 0 2.12l5.5 5.5c.29.29.68.44 1.06.44s.77-.15 1.06-.44l5.5-5.5c.59-.58.59-1.53 0-2.12zM5.21 10L10 5.21 14.79 10H5.21zM19 11.5s-2 2.17-2 3.5c0 1.1.9 2 2 2s2-.9 2-2c0-1.33-2-3.5-2-3.5z"/><path d="M0 20h24v3H0z"/></svg>
<svg class="i" style="left:988px;top:909px;fill:#fff" width="24" height="24" viewBox="0 0 24 24"><path d="M12 7c2.76 0 5 2.24 5 5 0 .65-.13 1.26-.36 1.83l2.92 2.92c1.51-1.26 2.7-2.89 3.43-4.75-1.73-4.39-6-7.5-11-7.5-1.4 0-2.74.25-3.98.7l2.16 2.16C10.74 7.130 11.35 7 12 7zM2 4.27l2.28 2.28.46.46C3.08 8.3 1.78 10.02 1 12c1.73 4.39 6 7.5 11 7.5 1.550 0 3.03-.3 4.38-.84l.42.42L19.73 22 21 20.73 3.27 3 2 4.27zM7.53 9.8l1.55 1.55c-.05.21-.08.43-.08.65 0 1.66 1.34 3 3 3 .22 0 .44-.03.65-.08l1.55 1.55c-.67.33-1.41.53-2.2.53-2.76 0-5-2.24-5-5 0-.79.2-1.53.53-2.2zm4.31-.78l3.15 3.15.02-.16c0-1.66-1.34-3-3-3l-.17.01z"/></svg>
<svg class="i" style="left:1031px;top:908px;fill:#fff" width="24" height="24" viewBox="0 0 24 24"><path d="M2 3h17.5v13.5H2z" fill="none" stroke="#fff" stroke-width="2"/><path d="M10.7 6.3c-2.8 0-4.8 1.8-5.6 3.6.8 1.8 2.8 3.6 5.6 3.6s4.8-1.8 5.6-3.6c-.8-1.8-2.8-3.6-5.6-3.6zm0 5.8a2.2 2.2 0 110-4.4 2.2 2.2 0 010 4.4z"/><circle cx="10.7" cy="9.9" r="1"/><path d="M21.2 5.5h1.8v1.8h-1.8zM21.2 9.3h1.8v1.8h-1.8zM21.2 13.1h1.8v1.8h-1.8zM8 19.3h2v1.6H8zM11.6 19.3h2v1.6h-2zM15.2 19.3h2v1.6h-2zM18.8 19.3h2v1.6h-2z"/></svg>
<div class="a" style="left:1066px;top:901px;width:1px;height:40px;background:#9a98a8"></div>
<div class="t" style="left:1079px;top:915px;font-size:14.5px;font-weight:bold;letter-spacing:0.4px;color:#fff">Sichtbarkeit ändern</div>
<svg class="i" style="left:1226px;top:909px;fill:#fff" width="18" height="24" viewBox="3 0 18 24"><path d="M7 14l5-5 5 5z"/></svg>

</body></html>
